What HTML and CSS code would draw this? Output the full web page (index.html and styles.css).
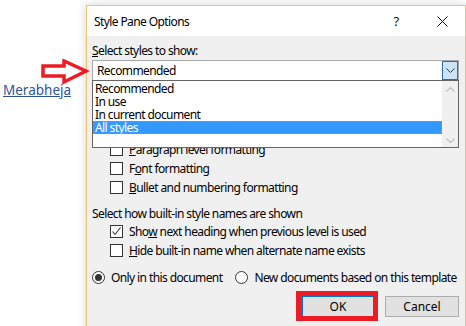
FILE: index.html
```html
<!DOCTYPE html>
<html>
<head>
    <title>Style Pane Options</title>
    <link rel="stylesheet" href="styles.css">
</head>
<body>

    <div class="page">
        <div class="doc">
            <a class="doc-link" href="#">Merabheja</a>
        </div>

        <div class="dialog">
            <div class="titlebar">
                <span class="title">Style Pane Options</span>
                <span class="tb-btn">?</span>
                <span class="tb-btn">
                    <svg width="11" height="11" viewBox="0 0 11 11"><path d="M0.5 0.5 L10.5 10.5 M10.5 0.5 L0.5 10.5" stroke="#111" stroke-width="1" fill="none"/></svg>
                </span>
            </div>

            <div class="dialog-body">
                <div class="label"><u>S</u>elect styles to show:</div>
                <div class="combo">
                    <div class="combo-value">Recommended</div>
                    <div class="combo-btn">
                        <svg width="9" height="5" viewBox="0 0 9 5"><path d="M0.5 0.5 L4.5 4.5 L8.5 0.5" stroke="#333" stroke-width="1" fill="none"/></svg>
                    </div>

                    <!-- open dropdown list, covers the sort options -->
                    <div class="combo-list">
                        <div class="list-items">
                            <div class="list-item">Recommended</div>
                            <div class="list-item">In use</div>
                            <div class="list-item">In current document</div>
                            <div class="list-item selected">All styles</div>
                            <div class="list-item"></div>
                        </div>
                        <div class="scrollbar">
                            <svg width="9" height="5" viewBox="0 0 9 5"><path d="M0.5 4.5 L4.5 0.5 L8.5 4.5" stroke="#c2c2c2" stroke-width="1.3" fill="none"/></svg>
                            <svg width="9" height="5" viewBox="0 0 9 5"><path d="M0.5 0.5 L4.5 4.5 L8.5 0.5" stroke="#c2c2c2" stroke-width="1.3" fill="none"/></svg>
                        </div>
                    </div>
                </div>

                <div class="checks checks-1">
                    <div class="check"><span class="box"></span><span><u>P</u>aragraph level formatting</span></div>
                    <div class="check"><span class="box"></span><span>F<u>o</u>nt formatting</span></div>
                    <div class="check"><span class="box"></span><span><u>B</u>ullet and numbering formatting</span></div>
                </div>

                <div class="label label-2">Select how built-in style names are shown</div>
                <div class="checks">
                    <div class="check">
                        <span class="box">
                            <svg width="11" height="11" viewBox="0 0 11 11"><path d="M1.5 5.5 L4 8.5 L9.5 1.5" stroke="#333" stroke-width="1.1" fill="none"/></svg>
                        </span>
                        <span>Sho<u>w</u> next heading when previous level is used</span>
                    </div>
                    <div class="check"><span class="box"></span><span><u>H</u>ide built-in name when alternate name exists</span></div>
                </div>

                <div class="radios">
                    <div class="radio"><span class="dot on"></span><span>Only in this document</span></div>
                    <div class="radio"><span class="dot"></span><span>New documents based on this template</span></div>
                </div>

                <div class="buttons">
                    <div class="mark">
                        <button class="btn btn-default">OK</button>
                    </div>
                    <button class="btn">Cancel</button>
                </div>
            </div>
        </div>

        <!-- red annotation arrows -->
        <svg class="arrow arrow-1" width="50" height="28" viewBox="0 0 50 28">
            <polygon points="3,7 24,7 24,2 46,12 24,23 24,17 3,17" fill="#fff" stroke="#ed1c24" stroke-width="3.5"/>
        </svg>
        <svg class="arrow arrow-2" width="60" height="26" viewBox="0 0 60 26">
            <polygon points="3,11 28,2 28,6 56,6 56,16 28,16 28,22" fill="none" stroke="#ed1c24" stroke-width="3.5"/>
        </svg>
    </div>

</body>
</html>
```

FILE: styles.css
```css
body {
    margin: 0;
    padding: 0;
    font-family: "Noto Sans", "Open Sans", sans-serif;
    color: #000;
    background-color: #fff;
}

.page {
    position: relative;
    display: flex;
    align-items: flex-start;
    height: 326px;
    overflow: hidden;
}

.doc {
    width: 86px;
    padding-top: 78px;
}

.doc-link {
    margin-left: 3px;
    font-size: 13.5px;
    color: #2e5597;
    text-decoration: underline;
}

.dialog {
    width: 378px;
    height: 340px;
    margin-top: 5px;
    border: 1px solid #ecc36f;
    background-color: #f0f0f0;
    box-shadow: 0 0 9px rgba(0, 0, 0, 0.18);
    font-size: 12px;
    letter-spacing: -0.6px;
}

.titlebar {
    display: flex;
    align-items: center;
    height: 30px;
    padding-left: 7px;
    background-color: #fff;
}

.title {
    flex: 1;
}

.tb-btn {
    display: flex;
    align-items: center;
    justify-content: center;
    width: 46px;
    height: 30px;
    font-size: 13px;
    color: #111;
}

.dialog-body {
    padding: 7px 6px 0 5px;
}

.label {
    height: 16px;
    line-height: 16px;
    margin-bottom: 1px;
}

.combo {
    position: relative;
    display: flex;
    height: 19px;
    border: 1px solid #a9a9a9;
    background-color: #fff;
}

.combo-value {
    flex: 1;
    padding-left: 4px;
    line-height: 19px;
}

.combo-btn {
    display: flex;
    align-items: center;
    justify-content: center;
    width: 14px;
    height: 17px;
    border: 1px solid #2a6fb0;
    background-color: #cce4f7;
}

.combo-list {
    position: absolute;
    top: 100%;
    left: -1px;
    right: -1px;
    z-index: 2;
    display: flex;
    height: 66px;
    border: 1px solid #646464;
    background-color: #fff;
}

.list-items {
    flex: 1;
    padding-top: 1px;
}

.list-item {
    height: 13px;
    line-height: 13px;
    padding-left: 2px;
}

.list-item.selected {
    background-color: #3399ff;
    color: #fff;
    outline: 1px dotted #d9822b;
    outline-offset: -1px;
}

.scrollbar {
    display: flex;
    flex-direction: column;
    justify-content: space-between;
    align-items: center;
    width: 16px;
    padding: 6px 0 4px;
    background-color: #f0f0f0;
}

.checks {
    padding-left: 18px;
}

.checks-1 {
    margin-top: 59px;
}

.check {
    display: flex;
    align-items: center;
    height: 19px;
}

.box {
    display: flex;
    align-items: center;
    justify-content: center;
    width: 11px;
    height: 11px;
    margin-right: 6px;
    border: 1px solid #333;
    background-color: #fff;
}

.label-2 {
    margin-top: 9px;
    margin-bottom: 0;
}

.radios {
    display: flex;
    gap: 13px;
    margin-top: 8px;
}

.radio {
    display: flex;
    flex-shrink: 0;
    align-items: center;
    height: 19px;
    white-space: nowrap;
}

.dot {
    position: relative;
    width: 11px;
    height: 11px;
    margin-right: 6px;
    border: 1px solid #333;
    border-radius: 50%;
    background-color: #fff;
}

.dot.on::after {
    content: "";
    position: absolute;
    left: 2px;
    top: 2px;
    width: 7px;
    height: 7px;
    border-radius: 50%;
    background-color: #333;
}

.buttons {
    display: flex;
    justify-content: flex-end;
    align-items: center;
    gap: 7px;
    margin-top: 4px;
}

.mark {
    border: 5px solid #ed1c24;
}

.btn {
    width: 74px;
    height: 21px;
    padding: 0;
    border: 1px solid #adadad;
    background-color: #e1e1e1;
    font-family: inherit;
    font-size: 12px;
    color: #000;
}

.btn-default {
    display: block;
    width: 72px;
    height: 20px;
    border-width: 1px 0 0 2px;
    border-color: #0078d7;
}

.arrow {
    position: absolute;
}

.arrow-1 {
    left: 40px;
    top: 59px;
}

.arrow-2 {
    left: 220px;
    top: 118px;
}
```
